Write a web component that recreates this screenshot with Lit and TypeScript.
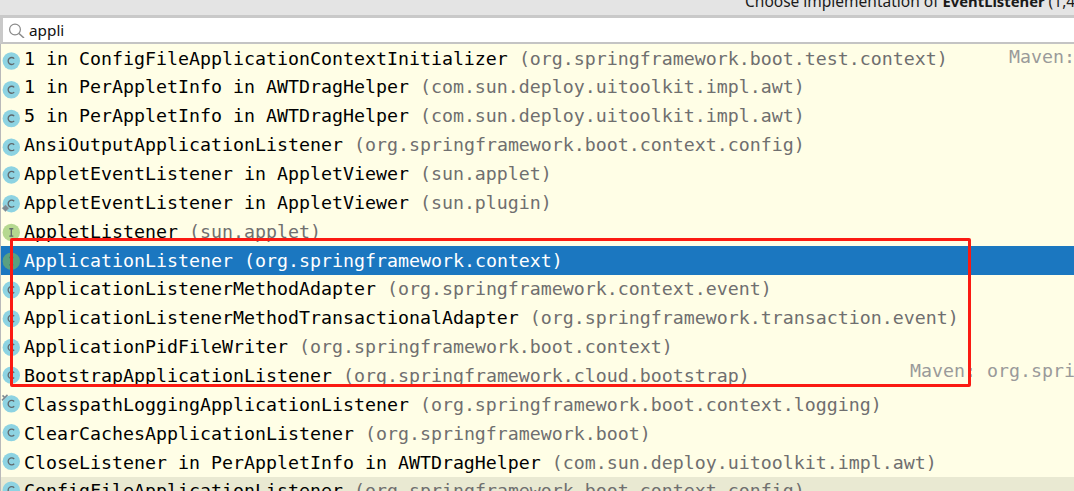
import { LitElement, html, css, svg } from "lit";
import { customElement } from "lit/decorators.js";

type Row = { n: string; p?: string; r?: string; k?: "c" | "i" | "g"; link?: "low" | "top"; sel?: boolean; hov?: boolean };

const rows: Row[] = [
  { n: "1 in ConfigFileApplicationContextInitializer", p: "(org.springframework.boot.test.context)", r: "Maven:" },
  { n: "1 in PerAppletInfo in AWTDragHelper", p: "(com.sun.deploy.uitoolkit.impl.awt)" },
  { n: "5 in PerAppletInfo in AWTDragHelper", p: "(com.sun.deploy.uitoolkit.impl.awt)" },
  { n: "AnsiOutputApplicationListener", p: "(org.springframework.boot.context.config)" },
  { n: "AppletEventListener in AppletViewer", p: "(sun.applet)" },
  { n: "AppletEventListener in AppletViewer", p: "(sun.plugin)", link: "low" },
  { n: "AppletListener", p: "(sun.applet)", k: "i" },
  { n: "ApplicationListener", p: "(org.springframework.context)", k: "g", sel: true },
  { n: "ApplicationListenerMethodAdapter", p: "(org.springframework.context.event)" },
  { n: "ApplicationListenerMethodTransactionalAdapter", p: "(org.springframework.transaction.event)" },
  { n: "ApplicationPidFileWriter", p: "(org.springframework.boot.context)" },
  { n: "BootstrapApplicationListener", p: "(org.springframework.cloud.bootstrap)", r: "Maven: org.spri" },
  { n: "ClasspathLoggingApplicationListener", p: "(org.springframework.boot.context.logging)", link: "top" },
  { n: "ClearCachesApplicationListener", p: "(org.springframework.boot)" },
  { n: "CloseListener in PerAppletInfo in AWTDragHelper", p: "(com.sun.deploy.uitoolkit.impl.awt)" },
  { n: "ConfigFileApplicationListener", p: "(org.springframework.boot.context.config)", hov: true },
];

const icon = (r: Row, i: number) => {
  const k = r.k ?? "c";
  const fill = k === "c" ? "#8dd3e2" : k === "i" ? "#b5d88f" : "#5aa080";
  const ink = k === "g" ? "#3f7a5c" : "#5f686c";
  const dy = 2 - 0.26 * i;
  return html`<svg class="ic" viewBox="0 0 20 20" width="20" height="20" style="transform: translateY(${dy}px)">
    <circle cx="9.3" cy="10" r="8.7" fill=${fill}></circle>
    ${k === "c"
      ? svg`<path d="M12.2 7.6 A3.5 3.5 0 1 0 12.2 12.4" fill="none" stroke=${ink} stroke-width="1.3"></path>`
      : svg`<path d="M7.3 6.3h4M9.3 6.3v7.4M7.3 13.7h4" fill="none" stroke=${ink} stroke-width="1.3"></path>`}
    ${r.link === "low"
      ? svg`<path d="M0 14.5l3.5-3.5 3.5 3.5-3.5 3.5z" fill="#7d8a93" stroke="#a9b4ba" stroke-width=".5"></path>`
      : ""}
    ${r.link === "top"
      ? svg`<path d="M0 6.5L5.5 1M0.5 1.5l2 2" fill="none" stroke="#7d8a93" stroke-width="1.5"></path>`
      : ""}
  </svg>`;
};

@customElement("app-root")
export class AppRoot extends LitElement {
  static styles = css`
    :host {
      display: block;
      position: relative;
      width: 1074px;
      height: 491px;
      overflow: hidden;
      background: #fffee6;
      font-family: "DejaVu Sans Mono", monospace;
    }
    .title {
      height: 15px;
      background: #e4e4e4;
      padding: 0 0 4px 745px;
      box-sizing: border-box;
      overflow: hidden;
      display: flex;
      align-items: flex-end;
      font: 15.5px/20px "Noto Sans", sans-serif;
      color: #1a1a1a;
      white-space: pre;
    }
    .title b { font-weight: 700; font-size: 14.8px; }
    .search {
      height: 29px;
      box-sizing: border-box;
      background: #fff;
      border-top: 3px solid #c9c9c9;
      border-bottom: 2px solid #c4c4c4;
      border-left: 3px solid #c9c9c9;
      display: flex;
      align-items: center;
      gap: 4px;
      padding-left: 6px;
      font: 15.3px "Noto Sans", sans-serif;
      color: #111;
    }
    .list {
      display: grid;
      grid-auto-rows: 28.86px;
      border-left: 1px solid #b9b9b9;
    }
    .row {
      display: flex;
      align-items: center;
      box-sizing: border-box;
      white-space: pre;
      font-size: 18.28px;
      line-height: 28.86px;
      padding: 1px 0 0 1px;
      color: #000;
      position: relative;
    }
    .row.sel { background: #1b77c0; color: #fff; }
    .row.hov { background: #e9e9d2; }
    .ic { flex: none; margin-right: 2px; overflow: visible; }
    .pk { color: #6f6f6f; }
    .row.sel .pk { color: #fff; }
    .rt { position: absolute; color: #9a9a9a; }
    .rt.m1 { left: 1008px; top: -1px; }
    .rt.m2 { left: 909px; top: -4px; }
    .mark {
      position: absolute;
      left: 10px;
      top: 238px;
      width: 961px;
      height: 149px;
      box-sizing: border-box;
      border: 3px solid #fb1a12;
      border-radius: 2px;
      pointer-events: none;
    }
  `;

  render() {
    return html`
      <div class="title"><span>Choose implementation of <b>EventListener</b> (1,4</span></div>
      <div class="search">
        <svg width="16" height="16" viewBox="0 0 16 16">
          <circle cx="6" cy="7.5" r="5.4" fill="none" stroke="#8a8a8a" stroke-width="1.2"></circle>
          <path d="M10 11.5L15 16" stroke="#8a8a8a" stroke-width="1.5"></path>
        </svg>
        <span>appli</span>
      </div>
      <div class="list">
        ${rows.map(
          (r, i) => html`<div class="row ${r.sel ? "sel" : ""} ${r.hov ? "hov" : ""}">
            ${icon(r, i)}<span>${r.n} </span><span class="pk">${r.p}</span>
            ${r.r ? html`<span class="rt ${i === 0 ? "m1" : "m2"}">${r.r}</span>` : ""}
          </div>`
        )}
      </div>
      <div class="mark"></div>
    `;
  }
}
